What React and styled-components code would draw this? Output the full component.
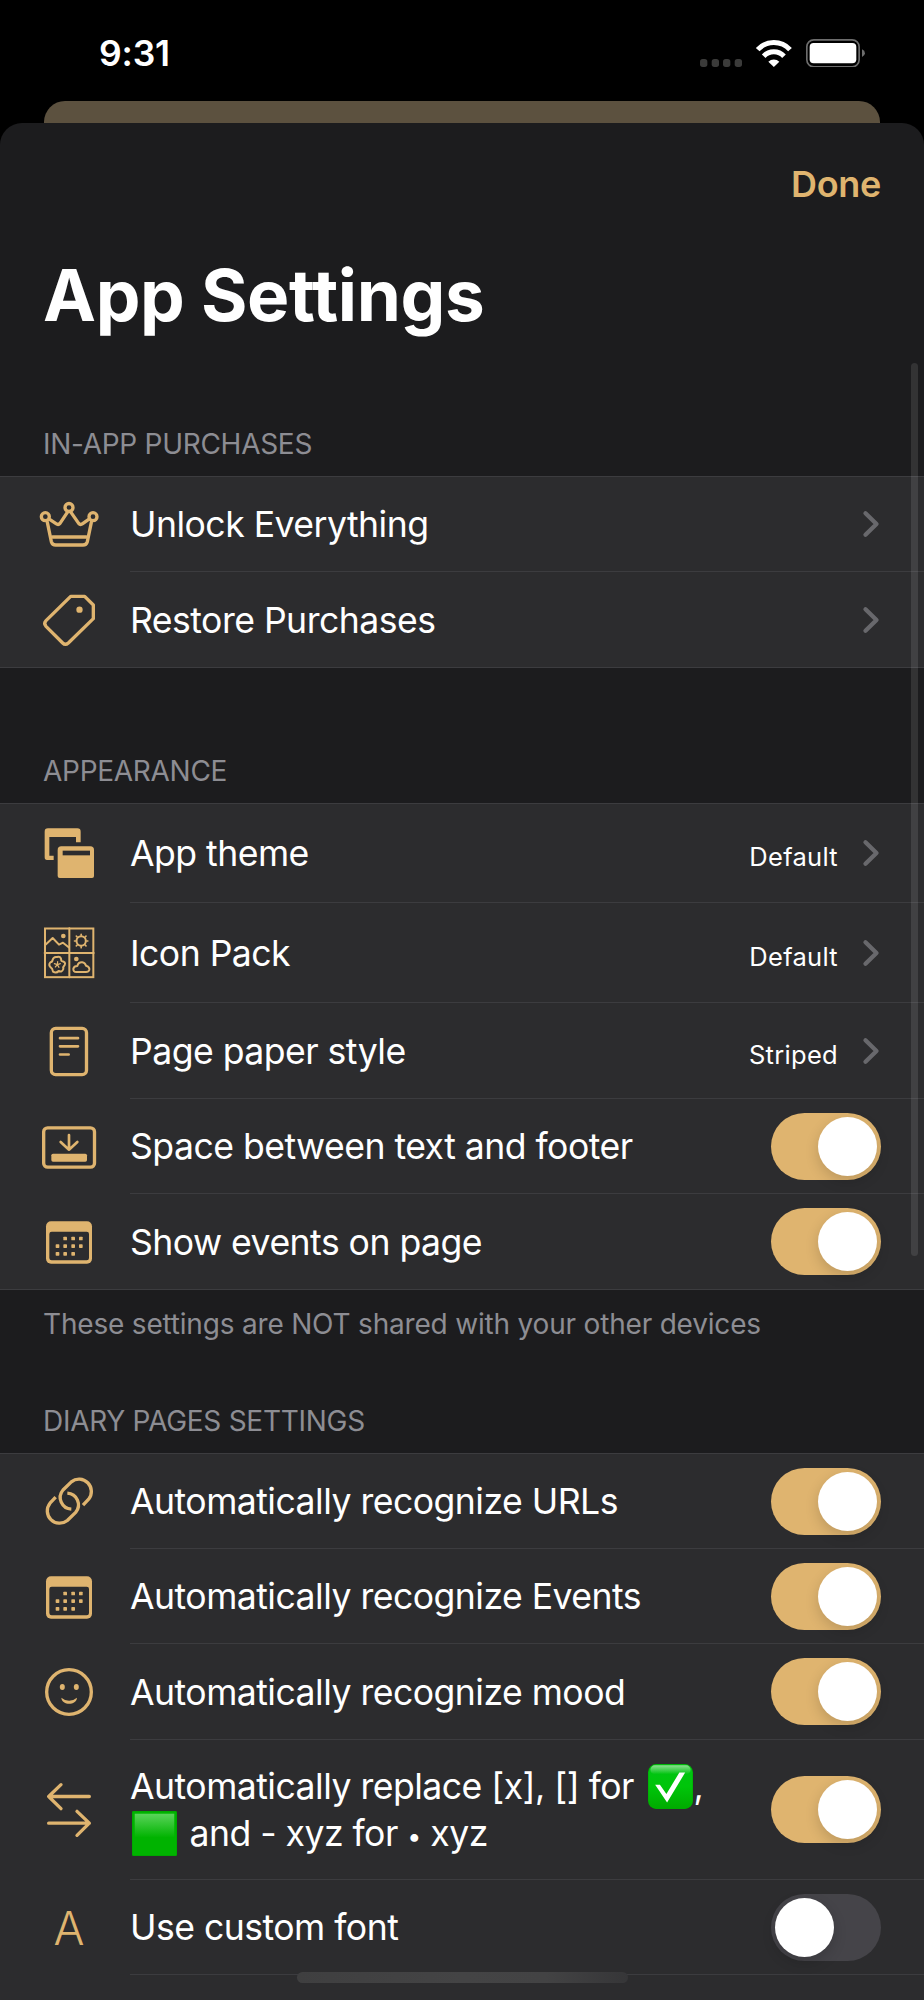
import { useState } from 'react';
import styled, { createGlobalStyle } from 'styled-components';

const gold = '#dfb46f';

const GlobalStyle = createGlobalStyle`
  * {
    box-sizing: border-box;
  }

  body {
    margin: 0;
    background: #000;
    color: #fff;
    font-family: Inter, "Liberation Sans", sans-serif;
  }
`;

const Screen = styled.div`
  position: relative;
  display: flex;
  flex-direction: column;
  width: 924px;
  height: 2000px;
  overflow: hidden;
  background: #000;
`;

const StatusBar = styled.div`
  display: flex;
  flex: none;
  align-items: center;
  justify-content: space-between;
  height: 101px;
  padding: 5px 59px 0 99px;
`;

const Time = styled.div`
  font-size: 35.5px;
  font-weight: 600;
  letter-spacing: -0.2px;
`;

const StatusIcons = styled.svg`
  width: 165px;
  height: 28.67px;
`;

const BackCard = styled.div`
  flex: none;
  height: 22px;
  margin: 0 44px;
  border-radius: 21px 21px 0 0;
  background: #5c513f;
`;

const Sheet = styled.main`
  flex: 1;
  min-height: 0;
  border-radius: 22px 22px 0 0;
  background: #1c1c1e;
`;

const NavBar = styled.div`
  display: flex;
  justify-content: flex-end;
  align-items: center;
  height: 122px;
  padding: 0 43px;
`;

const DoneButton = styled.button`
  padding: 0;
  border: 0;
  background: none;
  color: ${gold};
  font: inherit;
  font-size: 36px;
  font-weight: 600;
  letter-spacing: -0.3px;
  cursor: pointer;
`;

const Title = styled.h1`
  height: 181px;
  margin: 0;
  padding: 6px 43px 0;
  font-size: 71px;
  font-weight: 700;
  line-height: 88px;
  letter-spacing: -0.35px;
`;

const SectionHeader = styled.h2`
  display: flex;
  align-items: flex-end;
  height: ${(props) => props.$height}px;
  margin: 0;
  padding: 0 43px 15px;
  color: #8d8d93;
  font-size: 28px;
  font-weight: 400;
  line-height: 34px;
  letter-spacing: -0.28px;
`;

const SectionFooter = styled.p`
  height: 51px;
  margin: 0;
  padding: 17px 43px 0;
  color: #8d8d93;
  font-size: 28px;
  line-height: 34px;
  letter-spacing: -0.19px;
  white-space: nowrap;
`;

const Group = styled.div`
  border-top: 1px solid #3c3c3f;
  border-bottom: 1px solid #3c3c3f;
  background: #2c2c2e;
`;

const RowRoot = styled.div`
  display: flex;
  height: ${(props) => props.$height}px;
`;

const IconCell = styled.div`
  display: flex;
  flex: none;
  align-items: center;
  justify-content: center;
  width: 130px;
  padding-right: 1px;
  padding-left: 9px;
`;

const RowBody = styled.div`
  display: flex;
  flex: 1;
  align-items: center;
  padding-right: 43px;
  border-bottom: ${(props) => (props.$last ? '0' : '1px solid #3c3c3f')};
`;

const Label = styled.div`
  flex: 1;
  padding-top: 1px;
  font-size: 35.6px;
  line-height: 47px;
  letter-spacing: -0.52px;
  white-space: nowrap;
`;

const Value = styled.div`
  padding-top: 8px;
  margin-right: 24px;
  font-size: 25.5px;
  line-height: 32px;
  letter-spacing: 0.3px;
`;

const Chevron = styled.svg`
  width: 18px;
  height: 28px;
  margin-right: 1px;
  fill: none;
  stroke: #68686c;
  stroke-width: 4.3;
  stroke-linecap: round;
  stroke-linejoin: round;
`;

const Switch = styled.button`
  display: flex;
  flex: none;
  justify-content: ${(props) => (props.$on ? 'flex-end' : 'flex-start')};
  width: 110px;
  height: 67px;
  padding: 4px;
  border: 0;
  border-radius: 34px;
  background: ${(props) => (props.$on ? gold : '#454449')};
  cursor: pointer;
`;

const Knob = styled.span`
  width: 59px;
  height: 59px;
  border-radius: 50%;
  background: #fff;
  box-shadow: 0 5px 14px rgba(0, 0, 0, 0.16);
`;

const Icon = styled.svg`
  width: 64px;
  height: 64px;
  fill: none;
  stroke: ${gold};
  stroke-width: 10;
  stroke-linecap: round;
  stroke-linejoin: round;

  .solid {
    fill: ${gold};
    stroke: none;
  }

  .thin {
    stroke-width: 6;
  }

  .cut {
    fill: #2c2c2e;
    stroke: none;
  }
`;

const LetterIcon = styled.span`
  color: ${gold};
  font-size: 46px;
  font-weight: 300;
  line-height: 1;
`;

const Emoji = styled.svg`
  width: 45px;
  height: 45px;
  margin: 0 ${(props) => props.$after}px 0 ${(props) => props.$before}px;
  vertical-align: -10px;
`;

const Bullet = styled.span`
  font-size: 25px;
  line-height: 1;
  vertical-align: 1px;
`;

const ScrollBar = styled.div`
  position: absolute;
  top: 363px;
  right: 6px;
  width: 7px;
  height: 893px;
  border-radius: 4px;
  background: rgba(255, 255, 255, 0.1);
`;

const HomeIndicator = styled.div`
  position: absolute;
  bottom: 17px;
  left: 297px;
  width: 331px;
  height: 11px;
  border-radius: 6px;
  background: linear-gradient(90deg, #3f3f40, #444445 50%, #434344 75%, #363638);
`;

function CrownIcon() {
  return (
    <Icon viewBox="0 0 192 192">
      <circle cx="25" cy="71" r="12" />
      <circle cx="96" cy="43.500" r="12" />
      <circle cx="168" cy="71" r="12" />
      <path d="M31 88 L43 146 Q46 156 56 156 H138 Q148 156 151 146 L163 88" />
      <path d="M39 80 L57 92 Q64 97 69 91 L91 58 M102 58 L125 91 Q130 97 137 92 L154 80" />
      <path d="M46 132 H148" />
    </Icon>
  );
}

function TagIcon() {
  return (
    <Icon viewBox="0 0 192 192">
      <path d="M101 25 H143 L169 51 V92 L94 165 Q85 173 77 165 L27 115 Q19 106 27 98 Z" />
      <circle className="solid" cx="127.500" cy="65" r="9.500" />
    </Icon>
  );
}

function ThemeIcon() {
  return (
    <Icon viewBox="0 0 192 192">
      <path
        className="solid"
        d="M33 19 H121 Q131 19 131 29 V61 H117 V45 H37 V101 H50 V114 H30 Q23 114 23 106 V29 Q23 19 33 19 Z"
      />
      <path
        className="solid"
        d="M73 73 H160 Q171 73 171 84 V162 Q171 168 165 168 H68 Q62 168 62 162 V84 Q62 73 73 73 Z"
      />
      <rect className="cut" x="77" y="86" width="82" height="14" />
    </Icon>
  );
}

function PackIcon() {
  return (
    <Icon viewBox="0 0 192 192">
      <g className="thin">
        <rect x="24" y="22.500" width="145" height="146" strokeLinejoin="miter" />
        <path d="M97 22 V169 M23 96 H170" />
        <path d="M27 70 L47 51 L66 71 L78 65 L95 79" />
        <circle cx="132.500" cy="60" r="14" />
        <path
          strokeWidth="5"
          d="M132.500 40 V43 M132.500 77 V80 M112.500 60 H115.500 M149.500 60 H152.500 M118 45.500 L120.500 48 M144.500 72 L147 74.500 M118 74.500 L120.500 72 M144.500 48 L147 45.500"
        />
        <path d="M60 108 Q72 104 73 119 Q88 123 83 132 Q77 138 79 144 Q75 155 65 150 Q58 158 48 152 Q46 142 42 140 Q33 132 40 124 Q46 124 47 116 Q50 106 60 108 Z" />
        <path
          strokeWidth="3.5"
          d="M61 131 L62 122 M61 131 L70 128 M61 131 L66 139 M61 131 L55 138 M61 131 L52 128"
        />
        <path d="M118 153 Q108 153 109 143 Q111 135 121 135 Q124 123 136 124 Q144 125 147 134 Q158 137 157 146 Q155 153 147 153 Z" />
      </g>
      <circle className="solid" cx="79" cy="45" r="7" />
      <circle className="solid" cx="118" cy="114" r="7" />
    </Icon>
  );
}

function PageIcon() {
  return (
    <Icon viewBox="0 0 192 192">
      <rect x="43" y="28" width="105.500" height="139" rx="13" />
      <path strokeWidth="8" d="M69 57.500 H123 M69 82 H123 M69 106.500 H95" />
    </Icon>
  );
}

function FooterSpaceIcon() {
  return (
    <Icon viewBox="0 0 192 192">
      <rect x="20" y="38.500" width="152.500" height="118" rx="12" />
      <path strokeWidth="8" d="M96 60 V104 M71 81 L96 104 L121 81" />
      <rect className="solid" x="43" y="116" width="107" height="24" rx="5" />
    </Icon>
  );
}

const calendarDots = [
  [61, 85], [85, 85], [108, 85],
  [38, 108], [61, 108], [85, 108], [108, 108],
  [38, 131], [61, 131], [85, 131],
];

function CalendarIcon() {
  return (
    <Icon viewBox="0 0 192 192">
      <rect className="solid" x="27" y="34" width="138" height="127" rx="15" />
      <rect className="cut" x="37" y="65" width="119" height="86" rx="7" />
      {calendarDots.map(([x, y]) => (
        <rect
          key={`${x}-${y}`}
          className="solid"
          x={x + 18}
          y={y - 5}
          width="11"
          height="11"
          rx="2"
        />
      ))}
    </Icon>
  );
}

function LinkIcon() {
  return (
    <Icon viewBox="0 0 192 192">
      <g strokeLinecap="butt">
        <path d="M138 105.500 L155 87.500 A37 37 0 0 0 103 35.500 L78 60 A35 35 0 0 0 103 117.500" />
        <path d="M56 81.500 L39 99.500 A37 37 0 0 0 91 151.500 L116 127 A35 35 0 0 0 91 69.500" />
      </g>
    </Icon>
  );
}

function SmileIcon() {
  return (
    <Icon viewBox="0 0 192 192">
      <circle cx="96" cy="96" r="67" />
      <ellipse className="solid" cx="76" cy="81" rx="7.500" ry="9" />
      <ellipse className="solid" cx="118" cy="81" rx="7.500" ry="9" />
      <path className="solid" d="M73 113 Q96 132 120 113 C118 137 75 137 73 113 Z" />
    </Icon>
  );
}

function SwapIcon() {
  return (
    <Icon viewBox="0 0 192 192">
      <path d="M157 55.500 H35 M72 20 L35 55.500 L72 92" />
      <path d="M35 135.500 H157 M120 100 L157 135.500 L120 172" />
    </Icon>
  );
}

function CheckEmoji() {
  return (
    <Emoji viewBox="0 0 132 132" role="img" aria-label="✅" $before={5} $after={0}>
      <defs>
        <linearGradient id="check-fill" x1="0" y1="0" x2="0" y2="1">
          <stop offset="0" stopColor="#00c414" />
          <stop offset="0.5" stopColor="#00c50a" />
          <stop offset="1" stopColor="#00ab00" />
        </linearGradient>
        <linearGradient id="check-gloss" x1="0" y1="0" x2="0" y2="1">
          <stop offset="0" stopColor="#8be08f" />
          <stop offset="1" stopColor="#8be08f" stopOpacity="0" />
        </linearGradient>
      </defs>
      <rect width="132" height="132" rx="24" fill="#00a800" />
      <rect x="1.500" y="1.500" width="129" height="129" rx="23" fill="url(#check-fill)" />
      <rect x="7" y="4" width="118" height="26" rx="13" fill="url(#check-gloss)" />
      <path d="M21 61 L35 61 L54 88 L92 25 L109 25 L56 113 Z" fill="#fff" />
    </Emoji>
  );
}

function SquareEmoji() {
  return (
    <Emoji viewBox="0 0 132 132" role="img" aria-label="🟩" $before={2} $after={3}>
      <defs>
        <linearGradient id="square-gloss" x1="0" y1="0" x2="0" y2="1">
          <stop offset="0" stopColor="#5ad45a" />
          <stop offset="1" stopColor="#00b300" />
        </linearGradient>
      </defs>
      <rect width="132" height="132" rx="4" fill="#00a400" />
      <rect x="2" y="2" width="128" height="128" rx="3" fill="#00b300" />
      <rect x="8" y="8" width="116" height="70" fill="url(#square-gloss)" />
    </Emoji>
  );
}

function Row({ icon, label, value, toggle, height = 95, last }) {
  const [on, setOn] = useState(toggle === 'on');

  return (
    <RowRoot $height={height}>
      <IconCell>{icon}</IconCell>
      <RowBody $last={last}>
        <Label>{label}</Label>
        {value && <Value>{value}</Value>}
        {toggle ? (
          <Switch type="button" role="switch" aria-checked={on} $on={on} onClick={() => setOn(!on)}>
            <Knob />
          </Switch>
        ) : (
          <Chevron viewBox="0 0 18 28">
            <path d="M3.500 3.300 L14.500 14 L3.500 24.700" />
          </Chevron>
        )}
      </RowBody>
    </RowRoot>
  );
}

export default function App() {
  return (
    <Screen>
      <GlobalStyle />
      <StatusBar>
        <Time>9:31</Time>
        <StatusIcons viewBox="120 114 495 86">
          <g fill="#3b3b3a">
            <rect x="120" y="174" width="22" height="24" rx="8" />
            <rect x="155" y="174" width="22" height="24" rx="8" />
            <rect x="189" y="174" width="22" height="24" rx="8" />
            <rect x="224" y="174" width="22" height="24" rx="8" />
          </g>
          <g fill="none" stroke="#fff" strokeWidth="15">
            <path d="M293 146 A66 66 0 0 1 390 146" />
            <path d="M311 165.500 A42 42 0 0 1 372 165.500" />
          </g>
          <path d="M341.500 198 L325 182 A24 24 0 0 1 358 182 Z" fill="#fff" />
          <rect x="440.500" y="116.500" width="157" height="81" rx="21" fill="none" stroke="#6d6d6d" strokeWidth="5" />
          <rect x="449" y="126" width="140" height="61" rx="12" fill="#fff" />
          <path d="M606 145 Q615 149 615 156.500 Q615 164 606 168 Z" fill="#6d6d6d" />
        </StatusIcons>
      </StatusBar>
      <BackCard />
      <Sheet>
        <NavBar>
          <DoneButton type="button">Done</DoneButton>
        </NavBar>
        <Title>App Settings</Title>

        <SectionHeader $height={50}>IN-APP PURCHASES</SectionHeader>
        <Group>
          <Row icon={<CrownIcon />} label="Unlock Everything" />
          <Row icon={<TagIcon />} label="Restore Purchases" last />
        </Group>

        <SectionHeader $height={135}>APPEARANCE</SectionHeader>
        <Group>
          <Row icon={<ThemeIcon />} label="App theme" value="Default" height={99} />
          <Row icon={<PackIcon />} label="Icon Pack" value="Default" height={100} />
          <Row icon={<PageIcon />} label="Page paper style" value="Striped" height={96} />
          <Row icon={<FooterSpaceIcon />} label="Space between text and footer" toggle="on" />
          <Row icon={<CalendarIcon />} label="Show events on page" toggle="on" last />
        </Group>
        <SectionFooter>These settings are NOT shared with your other devices</SectionFooter>

        <SectionHeader $height={112}>DIARY PAGES SETTINGS</SectionHeader>
        <Group>
          <Row icon={<LinkIcon />} label="Automatically recognize URLs" toggle="on" />
          <Row icon={<CalendarIcon />} label="Automatically recognize Events" toggle="on" />
          <Row icon={<SmileIcon />} label="Automatically recognize mood" toggle="on" height={96} />
          <Row
            icon={<SwapIcon />}
            label={
              <>
                Automatically replace [x], [] for <CheckEmoji />,
                <br />
                <SquareEmoji /> and - xyz for <Bullet>•</Bullet> xyz
              </>
            }
            toggle="on"
            height={140}
          />
          <Row icon={<LetterIcon>A</LetterIcon>} label="Use custom font" toggle="off" />
          <RowRoot $height={95} />
        </Group>
      </Sheet>
      <ScrollBar />
      <HomeIndicator />
    </Screen>
  );
}
